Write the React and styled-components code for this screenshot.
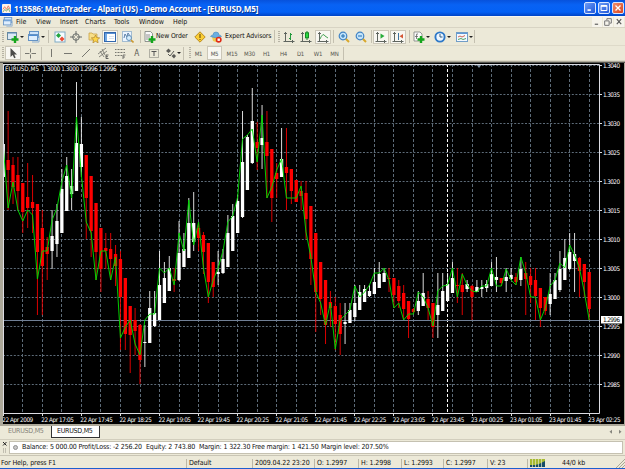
import styled, {createGlobalStyle, css} from 'styled-components'

// [up, high, top of body, bottom of body, low, close]
const candles = [
	[1,99,144,177,177,146],[0,111,160,170,210,208],[0,157,165,187,204,182],[0,157,175,191,210,210],
	[0,183,183,212,233,221],[0,163,197,208,228,210],[0,175,202,208,233,215],[0,204,204,252,315,279],
	[0,210,228,266,315,251],[0,237,247,254,280,251],[1,210,236,251,269,220],[1,204,221,244,257,208],
	[1,169,189,233,233,182],[1,157,176,211,211,165],[1,169,186,194,210,198],[1,82,143,191,191,117],
	[1,117,144,167,177,175],[0,155,155,198,239,222],[0,176,176,231,257,233],[0,203,203,252,280,280],
	[0,228,228,269,292,251],[0,233,248,251,269,251],[0,233,249,259,280,280],[0,245,254,266,286,257],
	[0,251,259,297,350,338],[0,278,278,334,350,327],[0,306,306,335,373,320],[0,308,320,331,355,344],
	[0,324,325,360,384,355],[1,325,342,343,367,320],[1,291,308,343,343,314],[1,291,313,326,327,314],
	[1,251,285,320,320,268],[1,262,278,303,303,273],[1,256,268,291,291,268],[0,268,279,281,292,285],
	[1,221,253,280,281,233],[1,233,249,267,267,251],[1,198,223,258,258,200],[1,192,223,242,251,245],
	[0,222,228,238,251,222],[0,232,235,252,274,268],[0,243,243,282,303,297],[0,262,262,287,297,280],
	[1,251,272,274,285,268],[1,249,259,273,274,251],[1,215,233,267,267,222],[1,204,216,251,251,216],
	[1,195,201,233,233,197],[1,111,162,217,218,139],[1,135,137,190,190,135],[1,88,121,163,164,129],
	[0,122,142,148,170,162],[1,105,138,145,169,115],[0,111,142,156,198,198],[0,149,149,198,222,187],
	[0,163,173,179,198,170],[1,128,159,177,177,159],[0,128,167,173,210,198],[0,169,169,191,204,198],
	[0,180,180,202,202,198],[0,181,191,196,210,186],[0,181,193,219,239,232],[0,206,206,259,285,257],
	[0,233,233,292,332,292],[0,262,262,299,315,303],[0,280,280,325,344,325],[0,291,302,308,327,303],
	[0,297,306,324,350,349],[0,303,315,334,355,320],[1,303,322,324,344,315],[1,303,310,323,323,310],
	[1,285,303,317,321,286],[1,285,292,310,310,297],[1,285,289,302,302,292],[1,285,291,296,297,285],
	[1,268,282,294,294,273],[1,262,274,288,288,273],[1,268,273,282,282,268],[0,268,278,279,292,280],
	[0,278,278,295,308,308],[0,280,286,301,308,303],[0,285,293,309,319,320],[0,301,301,319,338,314],
	[0,308,309,312,314,314],[1,291,301,311,315,292],[1,273,293,306,306,297],[0,291,299,308,320,308],
	[0,303,303,327,338,326],[1,273,305,315,338,291],[1,273,291,311,311,286],[1,273,284,301,301,285],
	[1,262,278,293,293,268],[0,268,285,286,303,297],[0,273,285,292,315,274],[1,280,284,289,292,285],
	[0,285,286,297,320,291],[1,280,287,292,292,292],[1,280,287,289,297,286],[1,280,284,288,292,286],
	[1,262,274,286,286,268],[1,257,277,280,292,286],[0,278,278,283,286,286],[1,268,277,281,292,269],
	[1,268,275,279,280,280],[0,273,277,282,285,285],[1,257,269,280,286,257],[0,262,273,279,315,273],
	[0,268,276,285,303,297],[0,268,280,296,320,297],[0,288,288,308,327,320],[0,297,297,311,315,308],
	[1,273,294,304,315,286],[1,273,280,299,299,280],[1,251,269,290,292,263],[1,239,258,280,280,268],
	[1,233,252,269,270,245],[1,233,254,261,292,255],[0,257,258,271,297,268],[0,264,264,282,297,292],
	[0,272,272,309,320,320],
]

const prices = ['1.3040','1.3035','1.3030','1.3025','1.3020','1.3015','1.3010','1.3005','1.3000','1.2995','1.2990','1.2985']

const times = ['22 Apr 2009','22 Apr 17:05','22 Apr 17:45','22 Apr 18:25','22 Apr 19:05','22 Apr 19:45','22 Apr 20:25','22 Apr 21:05',
	'22 Apr 21:45','22 Apr 22:25','22 Apr 23:05','22 Apr 23:45','23 Apr 00:25','23 Apr 01:05','23 Apr 01:45','23 Apr 02:25']

const candleX = (i) => 3.25 + i * 4.883
const priceY = (i) => Math.round(64.8 + i * 29.05) + 0.5
const gridX = (i) => Math.round(2.8 + i * 19.53) + 0.5

function Chart(){
	return(
		<ChartSvg viewBox="3 63 621 361">
			<rect x="3" y="63" width="621" height="361" fill="#000"/>
			<g stroke="#5d6b78" strokeWidth="1" strokeDasharray="2 1.6">
				{prices.map((p,i)=><line key={p} x1="3" x2="599" y1={priceY(i)} y2={priceY(i)}/>)}
				{Array.from({length: 30}, (_,i)=>
					<line key={i} x1={gridX(i+1)} x2={gridX(i+1)} y1="64" y2="413" strokeDasharray="3 2"/>
				)}
			</g>
			<line x1="447.5" x2="447.5" y1="64" y2="413" stroke="#fff" strokeDasharray="3 2"/>
			<path d="M476 64h6l-3 4z" fill="#8294a6"/>
			<path d="M3 320.5H600" stroke="#718096"/>
			{candles.map(([up,high,top,bottom,low],i)=>
				<g key={i} fill={up ? '#fff' : '#f00'}>
					<rect x={candleX(i)-0.5} y={high} width="1" height={low-high} opacity="0.85"/>
					<rect x={candleX(i)-1.65} y={top} width="3.3" height={Math.max(1,bottom-top)}/>
				</g>
			)}
			<polyline points={candles.map((c,i)=>`${candleX(i)},${c[5]}`).join(' ')} fill="none" stroke="#00d800" strokeWidth="0.95"/>
			<path d="M3.5 64V413.5H599.5V64.5H3" fill="none" stroke="#dcdce2"/>
			{prices.map((p,i)=>
				<g key={p}>
					<path d={`M600 ${priceY(i)}h2`} stroke="#ddd"/>
					<AxisText x="603" y={priceY(i)+2.3} textLength="17">{p}</AxisText>
				</g>
			)}
			{times.map((t,i)=>
				<g key={t}>
					<path d={`M${gridX(i*2)} 413v3`} stroke="#ddd"/>
					<AxisText x={2.2+i*39.06} y="421.6" textLength={i ? 32.5 : 31}>{t}</AxisText>
				</g>
			)}
			<rect x="601" y="316" width="21" height="7.5" fill="#fff"/>
			<AxisText x="603" y="322.2" textLength="17" $dark>1.2996</AxisText>
			<rect x="4" y="66" width="113" height="6.5" fill="#000"/>
			<AxisText x="5" y="71" textLength="34">EURUSD,M5</AxisText>
			<AxisText x="42.5" y="71" textLength="74">1.3000 1.3000 1.2996 1.2996</AxisText>
		</ChartSvg>
	)
}

const axes = <path d="M2.5 1v9.5M.5 10.5h11M9.5 9v3M1 2.5h3" stroke="#5f655f" fill="none"/>

const plus = <path d="M8 5v7M4.5 8.5h7" stroke="#15a51c" strokeWidth="2.4"/>

const glass = <>
	<path d="M7.5 7.5l3.5 3.5" stroke="#d9a72b" strokeWidth="2"/>
	<circle cx="5" cy="5" r="3.8" fill="#c4e5fb" stroke="#4284c5" strokeWidth="1.2"/>
</>

const icons = {
	newChart: <><rect x=".5" y="1.5" width="9" height="7" fill="#dbe9f5" stroke="#68899f"/><path d="M1 2h8" stroke="#5786b2"/>{plus}</>,
	profiles: <><rect x="1.5" y=".5" width="9" height="6" fill="#cde3fa" stroke="#6593c5"/><rect x=".5" y="3.5" width="9" height="6" fill="#dfeefd" stroke="#6593c5"/><path d="M1 4.5h8" stroke="#4e8bd0"/><path d="M4 11h7V5" fill="none" stroke="#8baed4"/></>,
	watch: <><rect x="1" y="1" width="10" height="10" fill="#f6fcff" stroke="#7eabc4"/><path d="M2 4.5L4.5 2 7 4.5 4.5 7z" fill="#23a53f"/><path d="M5.5 8L8 5.5 10.5 8 8 10.5z" fill="#ed4b32"/></>,
	target: <><circle cx="6" cy="6" r="3.3" fill="none" stroke="#666b68"/><path d="M6 0v5M6 7v5M0 6h5M7 6h5" stroke="#666b68"/></>,
	navigator: <><path d="M1 9V2h3l1 1h4v6z" fill="#f8df88" stroke="#c49b3d" strokeWidth=".7"/><path d="M7.5 4l1.2 2.6 3 .3-2.2 1.9.6 3-2.6-1.5-2.6 1.5.6-3-2.2-1.9 3-.3z" fill="#ffd647" stroke="#ad8329" strokeWidth=".7"/></>,
	terminal: <><rect x=".5" y="1.5" width="11" height="9" fill="#fff" stroke="#3167ad"/><path d="M1 2.5h10" stroke="#5990d4"/><path d="M1 3h2v7H1z" fill="#72a9e5"/><path d="M5 5.5h5M5 7.5h5" stroke="#c9d9eb" strokeWidth=".7"/></>,
	tester: <><rect x=".5" y=".5" width="9" height="10" fill="#eaf4ff" stroke="#a3bcd1"/><path d="M2 7l1-4 2 3 1-4 2 3" stroke="#5c80a8" fill="none"/><circle cx="7" cy="7" r="2.5" fill="#d5edff" stroke="#6692b8"/><path d="M9 9l2.5 2.5" stroke="#cc9a31" strokeWidth="1.6"/></>,
	order: <><path d="M1 .5h5.5l2 2v8H1z" fill="#fafafa" stroke="#777d78" strokeWidth=".8"/><path d="M2 4h4M2 6h4M2 8h2" stroke="#777" strokeWidth=".8"/>{plus}</>,
	alert: <><path d="M6 .8L11.2 6 6 11.2.8 6z" fill="#fbcf35" stroke="#ba8b22"/><path d="M6 3v4M6 8v1" stroke="#765712" strokeWidth="1.2"/></>,
	expert: <><path d="M2 6h7v3l-3 2-3-1z" fill="#f0ca4d"/><path d="M.5 5.5Q1 4 3 4 3 1 6 1t3 3q2 0 2.5 1.5Q6 8 .5 5.5z" fill="#69afe2" stroke="#4383b6" strokeWidth=".5"/><circle cx="8.7" cy="8.7" r="3" fill="#e02a16"/><rect x="7.5" y="7.5" width="2.4" height="2.4" fill="#fff"/></>,
	bars: <>{axes}<path d="M7.5 2v7M6 7.5h1.5M7.5 3.5H9" stroke="#22983a"/></>,
	candle: <>{axes}<path d="M7 0v9" stroke="#148726"/><rect x="5.5" y="1.8" width="3" height="5" fill="#2cdc40" stroke="#148726"/></>,
	line: <>{axes}<path d="M3 8q3-7 5-3l3 2" stroke="#45a354" fill="none"/></>,
	zoomIn: <>{glass}<path d="M3 5h4M5 3v4" stroke="#226fb0"/></>,
	zoomOut: <>{glass}<path d="M3 5h4" stroke="#226fb0"/></>,
	scroll: <>{axes}<path d="M5.5 2.5L9.5 5l-4 2.8z" fill="#28ad3b"/></>,
	shift: <>{axes}<path d="M6.5 2v7" stroke="#3e74a0"/><path d="M11 3v4.5L7.5 5.2z" fill="#d45735"/></>,
	indicators: <><path d="M1 1h6l2 2v7H1z" fill="#fafafa" stroke="#7d817d" strokeWidth=".8"/><path d="M5 3Q3 2 3.5 5v3M2 5.5h3" stroke="#666" fill="none" strokeWidth=".8"/>{plus}</>,
	clock: <><circle cx="6" cy="6" r="4.6" fill="#edf6ff" stroke="#2d78c8" strokeWidth="1.9"/><path d="M6 3v3h2.5" stroke="#365c7f" fill="none"/></>,
	template: <><rect x=".5" y="1.5" width="11" height="9" fill="#f4f9ff" stroke="#719dc7"/><path d="M1 2.5h10" stroke="#5e98d5"/><path d="M2 6l2-1 2 1 3-1.5" stroke="#cc6755" fill="none"/><path d="M2 8.5l3-1 2 1 3-1" stroke="#51a366" fill="none"/></>,
	cursor: <path d="M3.5 1v9l2.2-2 1.5 3.2 1.5-.7-1.5-3H10z" fill="#4c4c49"/>,
	cross: <path d="M6.5 1.5v4M6.5 7.5v4M1 6.5h4.5M7.5 6.5H12" stroke="#777770"/>,
	vline: <path d="M6.5 2v8" stroke="#777770"/>,
	hline: <path d="M2 6.5h8" stroke="#777770"/>,
	trend: <path d="M2 10l8-8" stroke="#777770"/>,
	channel: <><path d="M1 7l8-6M2 10l8-6M3 4l4 6M5 2l3 6" stroke="#6e6e68" strokeWidth=".8"/><path d="M11.5 8H9v3.5h2.5M9 9.7h2" stroke="#444" fill="none" strokeWidth=".8"/></>,
	fibo: <><path d="M1 2.5h10M1 5.5h10M1 8.5h7" stroke="#777770" strokeDasharray="1 .5"/><path d="M9 12V8h2.5M9 10h2" stroke="#555" fill="none" strokeWidth=".8"/></>,
	label: <><rect x="1.5" y="2.5" width="9" height="8" fill="none" stroke="#777770" strokeDasharray="1 1"/><path d="M3.5 4.5h5M6 4.5v4.5" stroke="#555"/></>,
	arrows: <><path d="M1 4l2.5-2.5L6 4 3.5 6z" fill="#5a5a56"/><path d="M3 7l2 2 4-5" stroke="#5a5a56" fill="none"/><path d="M6.5 9L9 7l2 2-2 2.5z" fill="#5a5a56"/></>,
}

function Tool({name, w, on}){
	return(
		<Slot $w={w} $on={on}>
			<svg width="12" height="12" viewBox="0 0 12 12">{icons[name]}</svg>
		</Slot>
	)
}

const Drop = ({w = 4}) => <Slot $w={w}><Caret/></Slot>
const Sep = ({w}) => <Slot $w={w}><Rule/></Slot>
const Handle = ({w = 5}) => <Slot $w={w}><Grip/></Slot>

export default function App(){
	return(
		<>
			<GlobalStyle/>
			<Window>
				<TitleBar>
					<Logo viewBox="0 0 10 10"><rect width="10" height="10" rx="1" fill="#fff2e8"/><path d="M1 6l2-3 2 3 2-4 2 4" fill="none" stroke="#eb765d"/><path d="M1 9l2-3 2 2 2-3 2 4" fill="none" stroke="#72a871"/></Logo>
					<Title>113586: MetaTrader - Alpari (US) - Demo Account - [EURUSD,M5]</Title>
					<Caption><svg viewBox="0 0 12 12"><path d="M3 8.5h4" stroke="#fff" strokeWidth="2"/></svg></Caption>
					<Caption><svg viewBox="0 0 12 12"><path d="M2.5 3h7v6h-7zM2.5 4h7" stroke="#fff" strokeWidth="1.2" fill="none"/></svg></Caption>
					<Caption $close><svg viewBox="0 0 12 12"><path d="M3 3l6 6M9 3l-6 6" stroke="#fff" strokeWidth="1.6"/></svg></Caption>
				</TitleBar>
				<MenuBar>
					<Slot $w={14}><svg width="10" height="10" viewBox="0 0 12 12">{icons.profiles}</svg></Slot>
					<MenuItem $w={20}>File</MenuItem>
					<MenuItem $w={24}>View</MenuItem>
					<MenuItem $w={25}>Insert</MenuItem>
					<MenuItem $w={29}>Charts</MenuItem>
					<MenuItem $w={25}>Tools</MenuItem>
					<MenuItem $w={34}>Window</MenuItem>
					<MenuItem $w={20}>Help</MenuItem>
					<Spacer/>
					<MdiButton><svg viewBox="0 0 9 9"><path d="M2.5 6.5h3" stroke="#555"/></svg></MdiButton>
					<MdiButton><svg viewBox="0 0 9 9"><path d="M3.5 3V1.5h4v4H6M1.5 3.5h4v4h-4z" stroke="#777" fill="none" strokeWidth=".9"/></svg></MdiButton>
					<MdiButton><svg viewBox="0 0 9 9"><path d="M2.5 2l4 4.5M6.5 2l-4 4.5" stroke="#555"/></svg></MdiButton>
				</MenuBar>
				<Toolbar $h={18}>
					<Handle/>
					<Tool name="newChart" w={15}/><Drop w={3}/>
					<Gap $w={3}/>
					<Tool name="profiles" w={15}/><Drop w={3}/>
					<Sep w={8}/>
					<Tool name="watch" w={15}/>
					<Tool name="target" w={18}/>
					<Tool name="navigator" w={17}/>
					<Tool name="terminal" w={16} on/>
					<Tool name="tester" w={20}/>
					<Sep w={5}/>
					<Tool name="order" w={13}/>
					<ToolText $w={36}>New Order</ToolText>
					<Tool name="alert" w={15}/>
					<Tool name="expert" w={18}/>
					<ToolText $w={48}>Expert Advisors</ToolText>
					<Sep w={3}/>
					<Handle/>
					<Tool name="bars" w={16}/>
					<Tool name="candle" w={18}/>
					<Tool name="line" w={16} on/>
					<Sep w={5}/>
					<Tool name="zoomIn" w={16}/>
					<Tool name="zoomOut" w={17}/>
					<Sep w={4}/>
					<Tool name="scroll" w={16} on/>
					<Gap $w={1}/>
					<Tool name="shift" w={16} on/>
					<Sep w={6}/>
					<Tool name="indicators" w={14}/><Drop w={3}/>
					<Gap $w={3}/>
					<Tool name="clock" w={15}/><Drop w={3}/>
					<Gap $w={4}/>
					<Tool name="template" w={15}/><Drop w={3}/>
					<Sep w={4}/>
				</Toolbar>
				<Toolbar $h={15}>
					<Handle/>
					<Tool name="cursor" w={16} on/>
					<Tool name="cross" w={18}/>
					<Sep w={5}/>
					<Tool name="vline" w={13}/>
					<Tool name="hline" w={22}/>
					<Tool name="trend" w={14}/>
					<Tool name="channel" w={20}/>
					<Tool name="fibo" w={14}/>
					<Period $w={19} $letter>A</Period>
					<Tool name="label" w={15}/>
					<Gap $w={2}/>
					<Tool name="arrows" w={15}/><Drop w={2}/>
					<Sep w={7}/>
					<Handle/>
					<Period $w={13}>M1</Period>
					<Gap $w={2}/>
					<Period $w={15} $on>M5</Period>
					<Gap $w={1}/>
					<Period $w={18}>M15</Period>
					<Period $w={17}>M30</Period>
					<Period $w={17}>H1</Period>
					<Period $w={17}>H4</Period>
					<Period $w={17}>D1</Period>
					<Period $w={18}>W1</Period>
					<Period $w={15}>MN</Period>
					<Sep w={3}/>
				</Toolbar>
				<ChartFrame><Chart/></ChartFrame>
				<Tabs>
					<Tab>EURUSD,M5</Tab>
					<Tab $active>EURUSD,M5</Tab>
					<Spacer/>
					<TabArrows viewBox="0 0 15 6"><path d="M4 .8v4L1.5 2.8zM11 .8v4l2.5-2z" fill="#85857d"/></TabArrows>
				</Tabs>
				<Terminal>
					<Dock><svg width="6" height="12" viewBox="0 0 6 12"><path d="M1 1l3.5 3.5M4.5 1L1 4.5" stroke="#222"/><path d="M1.5 7v5M3.5 7v5" stroke="#c1beb0"/></svg></Dock>
					<Balance>
						<Dot/>
						<Sum $w={56.5}>Balance: 5 000.00</Sum>
						<Sum $w={67.5}>Profit/Loss: -2 256.20</Sum>
						<Sum $w={53}>Equity: 2 743.80</Sum>
						<Sum $w={53}>Margin: 1 322.30</Sum>
						<Sum $w={69}>Free margin: 1 421.50</Sum>
						<Sum $w={72}>Margin level: 207.50%</Sum>
					</Balance>
				</Terminal>
				<StatusBar>
					<Cell $w={185}>For Help, press F1</Cell>
					<Cell $w={66} $line>Default</Cell>
					<Cell $w={62} $line>2009.04.22 23:20</Cell>
					<Cell $w={44} $line>O: 1.2997</Cell>
					<Cell $w={43} $line>H: 1.2998</Cell>
					<Cell $w={42} $line>L: 1.2993</Cell>
					<Cell $w={44} $line>C: 1.2997</Cell>
					<Cell $w={40} $line>V: 23</Cell>
					<Cell $w={35} $line>
						<svg width="15" height="8" viewBox="0 0 15 8"><rect width="15" height="8" fill="#174c68"/><path d="M0 0h15v2L9 5 5 6H0z" fill="#a6ba32"/><path d="M2.5 0v8M5.5 0v8M8.5 0v8M11.5 0v8" stroke="#e4e7c6" strokeWidth=".7"/></svg>
					</Cell>
					<Cell $w={45}>44/0 kb</Cell>
					<Spacer/>
					<svg width="9" height="9" viewBox="0 0 9 9"><path d="M0 9l9-9M3 9l6-6M6 9l3-3" stroke="#aaa797"/></svg>
				</StatusBar>
			</Window>
		</>
	)
}

const GlobalStyle = createGlobalStyle`
	body{
		margin: 0;
		overflow: hidden;
	}
	*{
		box-sizing: border-box;
	}
	svg{
		display: block;
		flex: none;
	}
`

const Window = styled.div`
	width: 625px;
	height: 469px;
	display: flex;
	flex-direction: column;
	overflow: hidden;
	background: #ece9d8;
	border-bottom: 1px solid #1c5ed0;
	font-family: 'DejaVu Sans Condensed', 'DejaVu Sans', sans-serif;
	font-stretch: condensed;
	font-size: 7px;
	line-height: 9px;
	color: #111;
	white-space: nowrap;
`

const TitleBar = styled.div`
	height: 16px;
	flex: none;
	display: flex;
	align-items: center;
	gap: 2px;
	padding: 0 1px 0 2px;
	background: linear-gradient(#0752dc, #0862f4 30%, #0461f5 75%, #0044c5);
`

const Logo = styled.svg`
	width: 9px;
	height: 9px;
`

const Title = styled.div`
	flex: 1;
	padding-left: 1px;
	color: #fff;
	font-family: 'Open Sans', sans-serif;
	font-stretch: normal;
	font-weight: 700;
	font-size: 8.2px;
	letter-spacing: -0.21px;
	text-shadow: 1px 1px 0 #0a358f;
`

const Caption = styled.div`
	width: 12px;
	height: 12px;
	border: 1px solid #d8e5ff;
	border-radius: 2px;
	background: ${p => p.$close ? 'linear-gradient(135deg, #f08e6c, #d9431e)' : 'linear-gradient(135deg, #6d9cf6, #2058d9)'};
`

const MenuBar = styled.div`
	height: 12px;
	flex: none;
	display: flex;
	align-items: center;
	padding: 0 1px;
	border-top: 1px solid #f8f7f1;
	border-bottom: 1px solid #d8d4c4;
`

const MenuItem = styled.div`
	width: ${p => p.$w}px;
	padding-left: 1px;
	font-size: 7px;
`

const Spacer = styled.div`
	flex: 1;
`

const MdiButton = styled.div`
	width: 10px;
	height: 10px;
	margin-left: 1px;
	background: #f6f4ec;
`

const Toolbar = styled.div`
	height: ${p => p.$h}px;
	flex: none;
	display: flex;
	align-items: center;
	border-bottom: 1px solid #dedac9;
`

const pressed = css`
	background: #f8f7f1;
	box-shadow: inset 0 0 0 1px #cbc7b8;
`

const Slot = styled.div`
	width: ${p => p.$w}px;
	height: 14px;
	flex: none;
	display: flex;
	align-items: center;
	justify-content: center;
	${p => p.$on && pressed}
`

const Gap = styled.div`
	width: ${p => p.$w}px;
	flex: none;
`

const Caret = styled.i`
	flex: none;
	border: 2px solid transparent;
	border-top-color: #222;
	border-bottom: 0;
`

const Rule = styled.i`
	width: 1px;
	height: 13px;
	background: #c4c0b0;
`

const Grip = styled.i`
	width: 2px;
	height: 12px;
	background: repeating-linear-gradient(#b7b3a3 0 1px, #e9e6d8 1px 2px);
`

const ToolText = styled.div`
	width: ${p => p.$w}px;
	flex: none;
	font-size: 6.8px;
	letter-spacing: -0.1px;
`

const Period = styled(Slot)`
	font-size: ${p => p.$letter ? 8 : 6}px;
	letter-spacing: -0.2px;
	color: #55554f;
`

const ChartFrame = styled.div`
	height: 363px;
	flex: none;
	padding: 2px 1px 0 3px;
	background: linear-gradient(#aca899 0 1px, #55554f 1px 2px, #aca899 2px);
`

const ChartSvg = styled.svg`
	width: 621px;
	height: 361px;
`

const AxisText = styled.text`
	font-family: 'DejaVu Sans Condensed', 'DejaVu Sans', sans-serif;
	font-size: 6.3px;
	fill: ${p => p.$dark ? '#000' : '#fff'};
`

const Tabs = styled.div`
	height: 15px;
	flex: none;
	display: flex;
	align-items: flex-start;
	border-top: 2px solid #aca899;
`

const Tab = styled.div`
	width: ${p => p.$active ? 49 : 51}px;
	height: 12px;
	padding-top: 1px;
	padding-left: ${p => p.$active ? 5 : 8}px;
	font-size: 7px;
	letter-spacing: -0.25px;
	color: ${p => p.$active ? '#111' : '#85837a'};
	${p => p.$active && css`
		background: #fff;
		border: solid #333;
		border-width: 0 1px 1px;
	`}
`

const TabArrows = styled.svg`
	width: 15px;
	height: 6px;
	margin: 3px 2px 0 0;
`

const Terminal = styled.div`
	height: 16px;
	flex: none;
	display: flex;
	padding: 1px 2px 1px 0;
	border-top: 1px solid #d2cebd;
`

const Dock = styled.div`
	width: 9px;
	padding: 0 2px;
`

const Balance = styled.div`
	flex: 1;
	display: flex;
	align-items: center;
	border: 1px solid #c5c1b1;
	background: #fff;
`

const Dot = styled.i`
	width: 5px;
	height: 5px;
	margin: 0 4px 0 3px;
	border-radius: 50%;
	border: 1px solid #919191;
	background: #c8c8c8;
`

const Sum = styled.div`
	width: ${p => p.$w}px;
	flex: none;
	letter-spacing: -0.15px;
`

const StatusBar = styled.div`
	flex: 1;
	display: flex;
	align-items: center;
	padding: 3px 0 0 1px;
	border-top: 1px solid #c9c5b5;
`

const Cell = styled.div`
	width: ${p => p.$w}px;
	height: 9px;
	flex: none;
	padding-left: ${p => p.$line ? 2 : 0}px;
	border-left: ${p => p.$line ? '1px solid #bbb7a7' : '0'};
	letter-spacing: -0.1px;
`
